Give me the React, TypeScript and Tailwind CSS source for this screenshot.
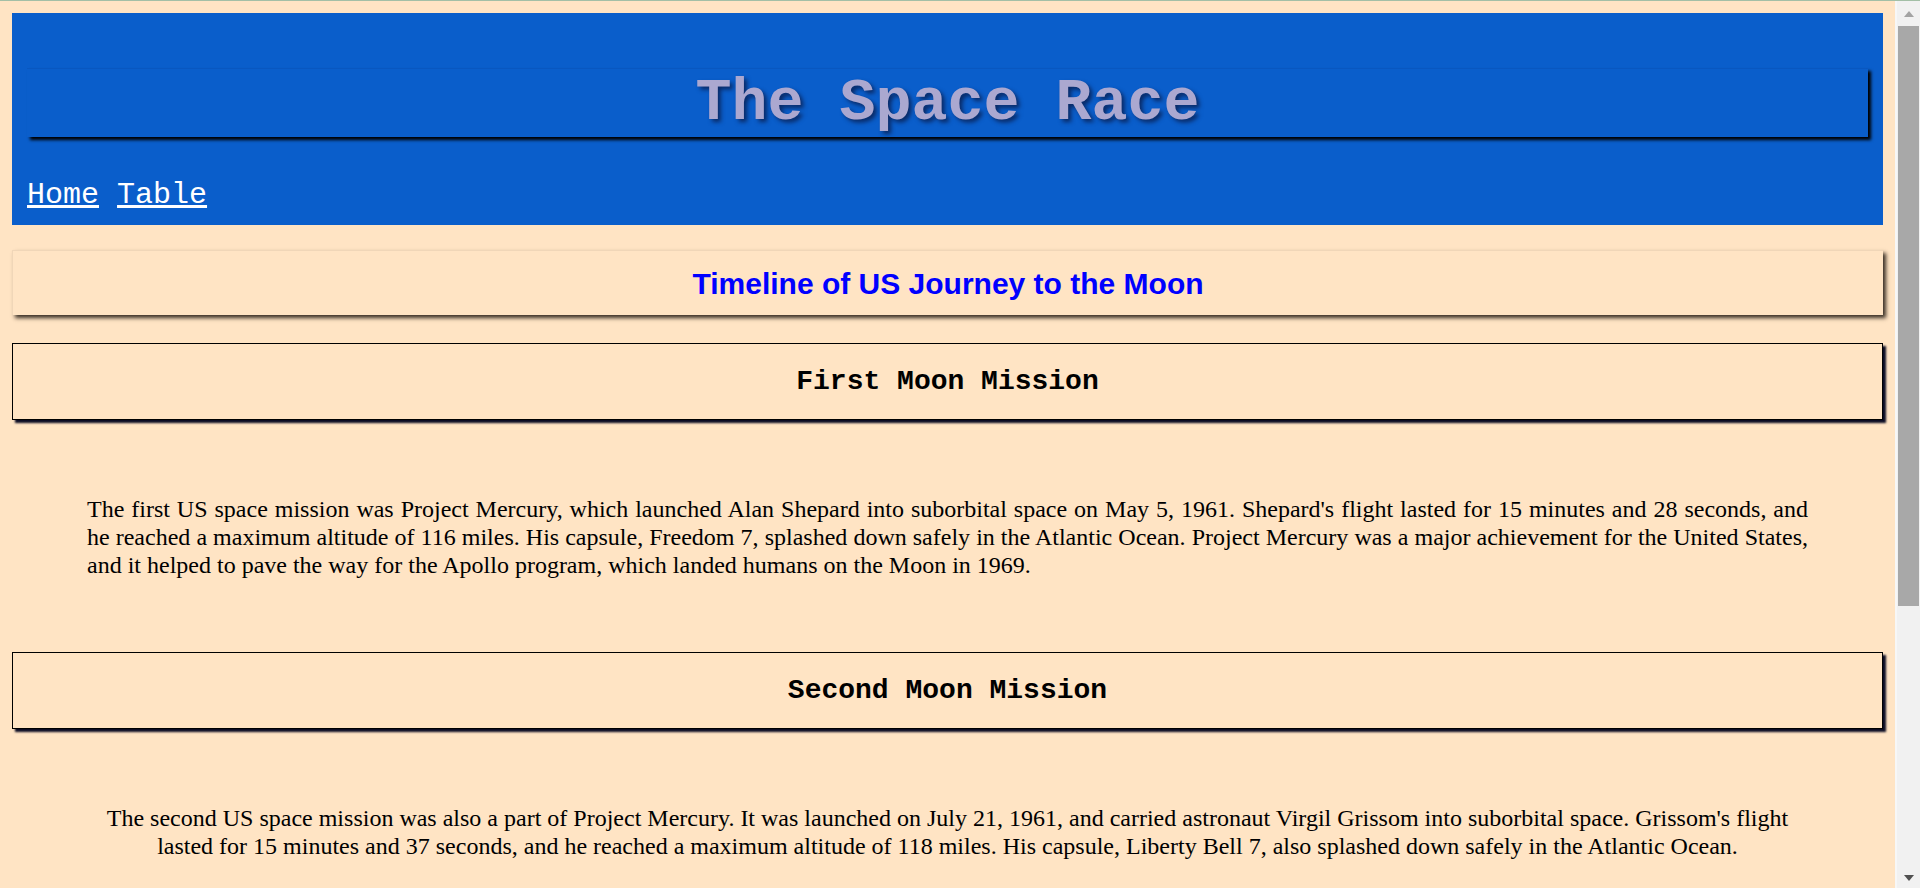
import React from 'react';

const missions = [
  {
    title: 'First Moon Mission',
    align: 'text-justify',
    text: "The first US space mission was Project Mercury, which launched Alan Shepard into suborbital space on May 5, 1961. Shepard's flight lasted for 15 minutes and 28 seconds, and he reached a maximum altitude of 116 miles. His capsule, Freedom 7, splashed down safely in the Atlantic Ocean. Project Mercury was a major achievement for the United States, and it helped to pave the way for the Apollo program, which landed humans on the Moon in 1969.",
  },
  {
    title: 'Second Moon Mission',
    align: 'text-center',
    text: "The second US space mission was also a part of Project Mercury. It was launched on July 21, 1961, and carried astronaut Virgil Grissom into suborbital space. Grissom's flight lasted for 15 minutes and 37 seconds, and he reached a maximum altitude of 118 miles. His capsule, Liberty Bell 7, also splashed down safely in the Atlantic Ocean.",
  },
];

const Scrollbar = () => (
  <aside className="sticky top-0 w-[25px] h-[887px] shrink-0 bg-[#f1f1f1] border-l-2 border-[#f7f7f7] flex flex-col items-center">
    <div className="h-[25px] flex items-center justify-center">
      <svg width="10" height="6" viewBox="0 0 10 6"><path d="M5 0 L10 6 L0 6 Z" fill="#a3a3a3" /></svg>
    </div>
    <div className="w-[21px] h-[580px] bg-[#a8a8a8]" />
    <div className="flex-1" />
    <div className="h-[20px] flex items-center justify-center">
      <svg width="10" height="6" viewBox="0 0 10 6"><path d="M0 0 L10 0 L5 6 Z" fill="#505050" /></svg>
    </div>
  </aside>
);

export default function App() {
  return (
    <div className="flex items-start bg-[#ffe4c4] border-t border-[#a3bfa6]">
      <main className="flex-1 min-w-0 min-h-[1320px] pt-[12px] px-[12px]">
        {/* Header */}
        <header className="bg-[#0a5ecb] px-[15px] pt-[55px] pb-[13px]">
          <h1 className="border-t border-[#0957c0] shadow-[3px_3px_3px_#000] text-center text-[60px] leading-[68px] font-bold text-[#aba8d0] [text-shadow:3px_3px_4px_#0a2a66] font-['Courier_New','Liberation_Mono',monospace]">
            The Space Race
          </h1>
          <nav className="mt-[41px] text-[30px] leading-[34px] text-white font-['Courier_New','Liberation_Mono',monospace]">
            <a href="#" className="underline">Home</a>{' '}
            <a href="#" className="underline">Table</a>
          </nav>
        </header>

        {/* Timeline title */}
        <div className="mt-[25px] h-[65px] flex items-center justify-center border-t border-l border-[#f0d6b8] shadow-[3px_3px_4px_#3a2f25]">
          <h2 className="text-[30px] font-bold text-[#0000ff] font-['Arial','Liberation_Sans',sans-serif]">
            Timeline of US Journey to the Moon
          </h2>
        </div>

        {missions.map((m) => (
          <section key={m.title}>
            <div className="mt-[28px] h-[77px] flex items-center justify-center border border-black shadow-[3px_3px_2px_#0b0b24]">
              <h3 className="text-[28px] font-bold text-black font-['Courier_New','Liberation_Mono',monospace]">
                {m.title}
              </h3>
            </div>
            <p className={`mt-[75px] mb-[73px] px-[75px] text-[24px] leading-[28px] text-black font-['Times_New_Roman','Liberation_Serif',serif] ${m.align}`}>
              {m.text}
            </p>
          </section>
        ))}
      </main>
      <Scrollbar />
    </div>
  );
}
